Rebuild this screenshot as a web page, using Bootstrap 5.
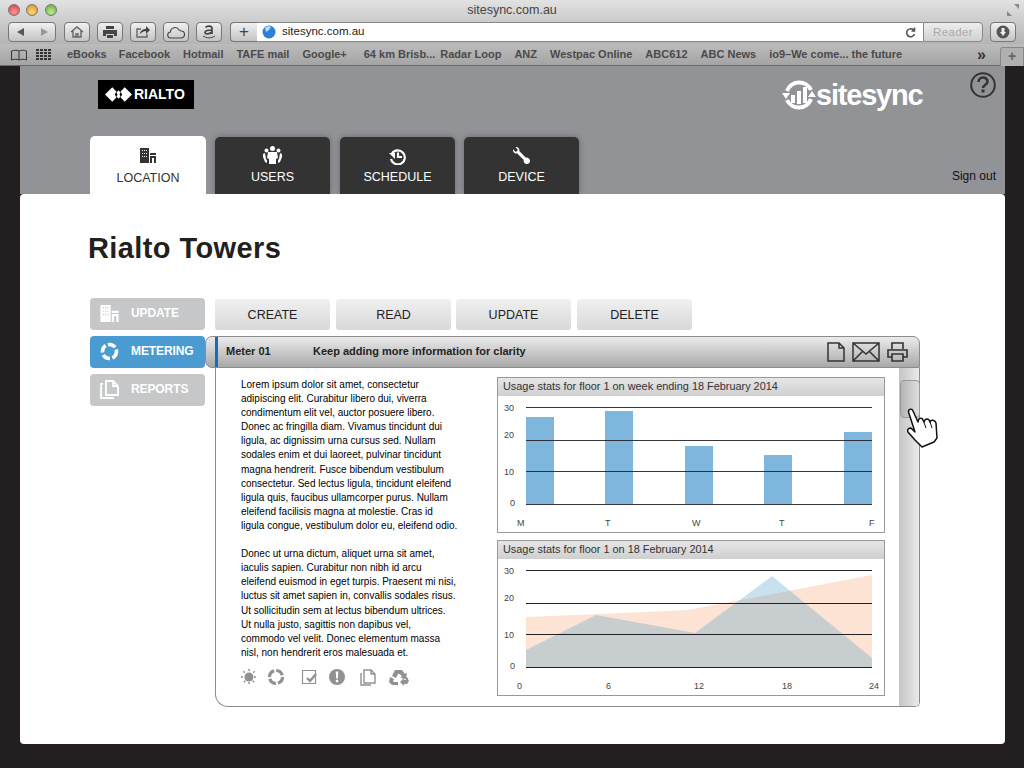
<!DOCTYPE html>
<html lang="en">
<head>
<meta charset="UTF-8" />
<title>sitesync.com.au</title>
<link href="https://cdn.jsdelivr.net/npm/bootstrap@5.3.0/dist/css/bootstrap.min.css" rel="stylesheet" />
<style>
  html, body { height: 768px; overflow: hidden; }
  body { background: #231f20; font-family: "Liberation Sans", Arial, sans-serif; color: #222; }
  svg { display: block; flex: none; }

  /* browser chrome */
  .chrome-top { height: 44px; background: linear-gradient(#e2e2e2, #b4b4b4); position: relative; }
  .chrome-title { height: 22px; font-size: 12.5px; line-height: 20px; color: #444; text-align: center; }
  .light { width: 12px; height: 12px; border-radius: 50%; position: absolute; top: 4px; border: 1px solid #777; }
  .light-r { left: 8px; background: radial-gradient(circle at 50% 70%, #ff9a9a, #d8343a); }
  .light-y { left: 26px; background: radial-gradient(circle at 50% 70%, #ffd97a, #d98a1c); }
  .light-g { left: 45px; background: radial-gradient(circle at 50% 70%, #c0ec90, #5ba83a); }
  .fullscreen { position: absolute; right: 4px; top: 3px; }
  .tool-row { height: 20px; padding-left: 8px; padding-right: 8px; }
  .tool-btn { width: 26px; height: 20px; border: 1px solid #777; border-radius: 4px; background: linear-gradient(#f0f0f0, #c4c4c4); color: #444; }
  .tool-back { width: 48px; margin-right: 8px; }
  .tool-gap { margin-right: 7px; }
  .tool-plus { width: 27px; border-radius: 4px 0 0 4px; border-right: 0; margin-left: 1px; font-size: 17px; line-height: 17px; }
  .addr { width: 666px; height: 20px; background: #fff; border: 1px solid #888; border-width: 1px 0; font-size: 11.5px; color: #222; padding-left: 5px; padding-right: 7px; gap: 6px; }
  .reader { width: 60px; height: 20px; border: 1px solid #888; border-radius: 0 4px 4px 0; background: linear-gradient(#eee, #d0d0d0); color: #aaa; font-size: 11.5px; text-align: center; line-height: 18px; margin-right: 7px; letter-spacing: .4px; }
  .bookmarks { height: 22px; background: linear-gradient(#bcbcbc, #a4a4a4); border-bottom: 1px solid #686868; font-size: 11px; font-weight: 700; color: #4a4a4a; position: relative; padding-left: 10px; }
  .bm-text { white-space: nowrap; }
  .bm-ebooks { margin-left: 16px; margin-right: 12px; }
  .bm-item { margin-right: 13px; }
  .bm-wide { margin-right: 17px; }
  .bm-tight { margin-right: 5px; }
  .bm-more { position: absolute; left: 977px; top: -1px; color: #333; font-size: 16px; }
  .bm-tab { position: absolute; right: 0; top: 3px; width: 24px; height: 19px; border: 1px solid #888; border-bottom: 0; border-radius: 3px 0 0 0; background: #b0b0b0; color: #666; text-align: center; font-size: 14px; line-height: 17px; }

  /* site header */
  .site-head { margin: 0 19px 0 20px; height: 128px; background: #929397; }
  .head-row { height: 70px; }
  .rialto-logo { width: 96px; height: 29px; background: #000; color: #fff; margin: 14px 0 0 78px; font-size: 14px; font-weight: 700; padding-left: 7px; gap: 2px; }
  .sync-logo { margin-top: 12px; margin-right: 48px; color: #fff; font-size: 29px; font-weight: 700; letter-spacing: -1.2px; width: 140px; line-height: 1; }
  .help-icon { margin-top: 6px; margin-right: 9px; }
  .tab-row { height: 58px; padding-left: 70px; gap: 9px; }
  .site-tab { width: 115px; height: 57px; margin-top: 1px; background: #333; color: #fff; border-radius: 5px 5px 0 0; font-size: 12.5px; text-decoration: none; box-shadow: 0 0 6px rgba(0,0,0,.3); padding-top: 9px; line-height: 1; text-align: center; }
  .site-tab svg { margin: 0 auto 7px; }
  .site-tab-on { width: 116px; height: 58px; margin-top: 0; background: #fff; color: #333; box-shadow: none; padding-top: 12px; }
  .site-tab-on svg { margin-bottom: 9px; }
  .tab-extra { margin-left: 1px; }
  .tab-low { padding-top: 11px; }
  .tab-low svg { margin-bottom: 6px; }
  .tab-device { padding-top: 10px; }
  .sign-out { margin-left: auto; margin-right: 9px; font-size: 12px; color: #111; text-decoration: none; align-self: flex-end; padding-bottom: 9px; }

  /* white page */
  .sheet { margin: 0 19px 0 20px; height: 550px; background: #fff; border-radius: 4px; padding: 38px 0 0 68px; position: relative; }
  .sheet-title { font-size: 29px; font-weight: 700; line-height: 32px; margin: 0 0 34px; color: #231f20; letter-spacing: .4px; }
  .side-col { width: 117px; margin-left: 2px; padding-top: 0; }
  .side-btn { width: 115px; height: 32px; margin-bottom: 6px; border-radius: 4px; background: #c6c7c9; color: #fff; font-size: 12px; font-weight: 700; padding-left: 10px; padding-bottom: 2px; gap: 12px; text-decoration: none; letter-spacing: -.1px; }
  .side-on { background: #4a9bd2; }
  .main-col { width: 715px; margin-left: -2px; }
  .crud-row { padding-left: 10px; gap: 6px; padding-top: 1px; margin-bottom: 6px; height: 32px; }
  .crud-btn { width: 115px; height: 31px; padding: 0; border: 0; border-radius: 3px; background: linear-gradient(#f0f0f0, #d8d8d8); color: #222; font-size: 12.5px; line-height: 32px; text-align: center; text-decoration: none; }
  .crud-pull { margin-left: -1px; }
  .panel-head { height: 32px; border: 1px solid #8c8c8c; border-radius: 7px 7px 0 7px; background: linear-gradient(#ebebeb, #a8a8a8); font-size: 11px; font-weight: 700; padding-left: 9px; padding-right: 11px; color: #222; }
  .panel-stripe { width: 3px; height: 30px; background: #0e6fbe; margin-right: 8px; }
  .panel-meter { width: 87px; margin-bottom: 2px; }
  .panel-clarity { margin-bottom: 2px; }
  .panel-icons { margin-left: auto; gap: 7px; }
  .panel-body { margin-left: 10px; height: 339px; border: 1px solid #8c8c8c; border-top: 0; border-radius: 0 0 5px 13px; position: relative; }
  .text-col { width: 281px; padding: 10px 0 0 25px; }
  .lorem { font-size: 10px; line-height: 14.1px; color: #000; white-space: nowrap; margin: 0 0 14.1px; }
  .mini-icons { margin-top: -6px; margin-left: -1px; }
  .chart-col { width: 388px; padding-top: 9px; gap: 7px; }
  .chart-box { height: 156px; border: 1px solid #999; background: #fff; }
  .chart-head { height: 18px; background: linear-gradient(#e6e6e6, #cfcfcf); font-size: 10.9px; line-height: 17px; padding-left: 5px; color: #333; white-space: nowrap; }
  .chart-label { font: 9px "Liberation Sans", Arial, sans-serif; fill: #444; }
  .scroll-track { width: 20px; margin-left: 14px; background: linear-gradient(90deg, #c4c4c4, #eaeaea); padding-top: 12px; border-radius: 0 0 4px 0; }
  .scroll-thumb { width: 20px; height: 38px; margin-left: 1px; background: linear-gradient(90deg, #b4b4b4, #dedede); border: 1px solid #999; border-radius: 4px; }
  .hand { position: absolute; left: 691px; top: 40px; }
</style>
</head>
<body>
  <div class="chrome-top">
    <span class="light light-r"></span><span class="light light-y"></span><span class="light light-g"></span>
    <div class="chrome-title">sitesync.com.au</div>
    <svg class="fullscreen" width="14" height="14" viewBox="0 0 14 14" fill="#888"><path d="M1 13V8l5 5zM13 1v5L8 1z"/></svg>
    <div class="tool-row d-flex align-items-center">
      <div class="tool-btn tool-back d-flex align-items-center justify-content-around">
        <svg width="10" height="10" viewBox="0 0 10 10" fill="#555"><path d="M8 1v8L1 5z"/></svg>
        <svg width="10" height="10" viewBox="0 0 10 10" fill="#999"><path d="M2 1v8l7-4z"/></svg>
      </div>
      <div class="tool-btn tool-gap d-flex align-items-center justify-content-center">
        <svg width="14" height="14" viewBox="0 0 14 14" fill="none" stroke="#666" stroke-width="1.4"><path d="M1 7l6-5 6 5M3 6v6h8V6M6 12V9h2v3"/></svg>
      </div>
      <div class="tool-btn tool-gap d-flex align-items-center justify-content-center">
        <svg width="16" height="14" viewBox="0 0 16 14"><path fill="#444" d="M4 1h8v3H4zM1 5h14v6h-3V9H4v2H1zM5 10h6v3H5z"/></svg>
      </div>
      <div class="tool-btn tool-gap d-flex align-items-center justify-content-center">
        <svg width="16" height="14" viewBox="0 0 16 14"><path fill="none" stroke="#666" stroke-width="1.4" d="M12 9v3H2V4h4"/><path fill="#444" d="M5 9c0-3 3-5 6-5V1l4 4-4 4V6c-2 0-4 1-6 3z"/></svg>
      </div>
      <div class="tool-btn tool-gap d-flex align-items-center justify-content-center">
        <svg width="18" height="13" viewBox="0 0 18 13" fill="none" stroke="#444" stroke-width="1.1"><path d="M4 12a3 3 0 0 1-.5-6A4.500 4.500 0 0 1 12 4a3 3 0 0 1 2 1 3.500 3.500 0 0 1 0 7z"/></svg>
      </div>
      <div class="tool-btn tool-gap d-flex align-items-center justify-content-center">
        <svg width="14" height="16" viewBox="0 0 14 16" fill="none" stroke="#444"><path stroke-width="1.7" d="M3.500 3.500C5 1.500 10 1.500 10 4.500V10M10 6C6 6 3 6.500 3 8.500s4 2 7-.5"/><path d="M1 12c4 2.500 8 2.500 12 0"/></svg>
      </div>
      <div class="tool-btn tool-plus text-center">+</div>
      <div class="addr d-flex align-items-center">
        <svg width="14" height="14" viewBox="0 0 14 14"><circle cx="7" cy="7" r="6.500" fill="#2f7fd8"/><path fill="#bcdcf8" d="M3 3c2-2 5-2 6-1L7 5 4 7z"/></svg>
        <span>sitesync.com.au</span>
        <svg class="ms-auto" width="11" height="11" viewBox="0 0 11 11" fill="none" stroke="#555" stroke-width="1.6"><path d="M9 3.500A4 4 0 1 0 9.500 7M9.500 0.500v3.500h-3"/></svg>
      </div>
      <div class="reader">Reader</div>
      <div class="tool-btn d-flex align-items-center justify-content-center">
        <svg width="14" height="14" viewBox="0 0 14 14"><circle cx="7" cy="7" r="6.500" fill="#555"/><path fill="#eee" d="M5.500 3h3v4H10l-3 4-3-4h1.500z"/></svg>
      </div>
    </div>
  </div>
  <div class="bookmarks d-flex align-items-center">
    <svg width="18" height="12" viewBox="0 0 18 12" fill="none" stroke="#333"><path d="M9 2C7 1 4 1 1.500 2v9C4 10 7 10 9 11c2-1 5-1 7.500 0V2C14 1 11 1 9 2zM9 2v9"/></svg>
    <svg class="ms-2" width="15" height="11" viewBox="0 0 15 11" fill="#333"><path d="M0 0h3v2H0zM4 0h3v2H4zM8 0h3v2H8zM12 0h3v2h-3zM0 3h3v2H0zM4 3h3v2H4zM8 3h3v2H8zM12 3h3v2h-3zM0 6h3v2H0zM4 6h3v2H4zM8 6h3v2H8zM12 6h3v2h-3zM0 9h3v2H0zM4 9h3v2H4zM8 9h3v2H8zM12 9h3v2h-3z"/></svg>
    <div class="bm-text d-flex">
      <span class="bm-ebooks">eBooks</span><span class="bm-item">Facebook</span><span class="bm-item">Hotmail</span><span class="bm-item">TAFE mail</span><span class="bm-wide">Google+</span><span class="bm-tight">64 km Brisb...</span><span class="bm-item">Radar Loop</span><span class="bm-item">ANZ</span><span class="bm-item">Westpac Online</span><span class="bm-item">ABC612</span><span class="bm-item">ABC News</span><span class="bm-item">io9–We come... the future</span>
    </div>
    <span class="bm-more">»</span>
    <span class="bm-tab">+</span>
  </div>

  <div class="site-head">
    <div class="head-row d-flex align-items-start">
      <div class="rialto-logo d-flex align-items-center">
        <svg width="27" height="17" viewBox="0 0 26 16" fill="#fff"><path d="M0 8l7-7 4 4-1.500 3 1.500 3-4 4zM26 8l-7-7-4 4 1.500 3-1.500 3 4 4zM13 4l2 2-1 2 1 2-2 2-2-2 1-2-1-2z"/></svg>
        <span>RIALTO</span>
      </div>
      <div class="sync-logo ms-auto d-flex align-items-center">
        <svg width="34" height="34" viewBox="0 0 34 34"><path fill="none" stroke="#fff" stroke-width="4" d="M5 13A13 13 0 0 1 29 12M29 21A13 13 0 0 1 5 22"/><path fill="#fff" d="M0 15l8 0-4 6zM34 19l-8 0 4-6zM9 17h4v8H9zM15 13h4v13h-4zM21 9h4v16h-4z"/></svg>
        <span>sitesync</span>
      </div>
      <svg class="help-icon" width="26" height="26" viewBox="0 0 26 26"><circle cx="13" cy="13" r="11.800" fill="none" stroke="#333" stroke-width="2"/><path fill="none" stroke="#333" stroke-width="2.600" d="M8.500 10c0-6 9-6 9-.5 0 3.500-4.500 3.500-4.500 6.500"/><rect x="11.500" y="17.500" width="3" height="3" fill="#333"/></svg>
    </div>
    <div class="tab-row d-flex">
      <a class="site-tab site-tab-on" href="#">
        <svg width="16" height="15" viewBox="0 0 16 15" fill="#333"><path d="M0 0h9v15H0zM10 5h6v2h-6zM10 8h6v7h-2v-5h-2v5h-2z"/><path fill="#fff" d="M2 2h1v1H2zM4 2h1v1H4zM6 2h1v1H6zM2 5h1v1H2zM4 5h1v1H4zM6 5h1v1H6zM2 8h1v1H2zM4 8h1v1H4zM6 8h1v1H6z"/></svg>
        LOCATION
      </a>
      <a class="site-tab" href="#">
        <svg width="19" height="18" viewBox="0 0 19 18" fill="#fff"><circle cx="9.500" cy="2.500" r="2.500"/><circle cx="3.500" cy="4.500" r="2"/><circle cx="15.500" cy="4.500" r="2"/><path d="M5 6h9l1 6-2 1v5H6v-5l-2-1zM0 8l2-1 1 6 1 1v3l-2-1-2-5zM19 8l-2-1-1 6-1 1v3l2-1 2-5z"/></svg>
        USERS
      </a>
      <a class="site-tab tab-extra tab-low" href="#">
        <svg width="17" height="17" viewBox="0 0 17 17" fill="none" stroke="#fff" stroke-width="2.200"><path d="M3 5.500A7 7 0 1 1 2 11M9 4.500v4.500h4"/><path fill="#fff" stroke="none" d="M0 5h6v6z"/></svg>
        SCHEDULE
      </a>
      <a class="site-tab tab-device" href="#">
        <svg width="17" height="17" viewBox="0 0 16 16" fill="#fff"><path d="M.102 2.223A3.004 3.004 0 0 0 3.780 5.897l6.341 6.252A3.003 3.003 0 0 0 13 16a3 3 0 1 0-.851-5.878L5.897 3.781A3.004 3.004 0 0 0 2.223.1l2.141 2.142L4 4l-1.757.364L.102 2.223z"/></svg>
        DEVICE
      </a>
      <a class="sign-out" href="#">Sign out</a>
    </div>
  </div>

  <div class="sheet">
    <h1 class="sheet-title">Rialto Towers</h1>
    <div class="d-flex">
      <div class="side-col">
        <a class="side-btn d-flex align-items-center" href="#">
          <svg width="19" height="17" viewBox="0 0 16 15" fill="#fff"><path d="M0 0h9v15H0zM10 5h6v2h-6zM10 8h6v7h-2v-5h-2v5h-2z"/><path fill="#c6c7c9" d="M2 2h1v1H2zM4 2h1v1H4zM6 2h1v1H6zM2 5h1v1H2zM4 5h1v1H4zM6 5h1v1H6zM2 8h1v1H2zM4 8h1v1H4zM6 8h1v1H6z"/></svg>
          <span>UPDATE</span>
        </a>
        <a class="side-btn side-on d-flex align-items-center" href="#">
          <svg width="19" height="19" viewBox="0 0 19 19" fill="none" stroke="#fff" stroke-width="3.600" stroke-dasharray="8 2.400"><circle cx="9.500" cy="9.500" r="7"/></svg>
          <span>METERING</span>
        </a>
        <a class="side-btn d-flex align-items-center" href="#">
          <svg width="19" height="19" viewBox="0 0 19 19" fill="none" stroke="#fff" stroke-width="1.800"><path d="M6 1h7l5 5v9H6zM13 1v5h5M3 4H1v14h12v-1"/></svg>
          <span>REPORTS</span>
        </a>
      </div>
      <div class="main-col">
        <div class="crud-row d-flex">
          <a class="crud-btn" href="#">CREATE</a>
          <a class="crud-btn" href="#">READ</a>
          <a class="crud-btn crud-pull" href="#">UPDATE</a>
          <a class="crud-btn" href="#">DELETE</a>
        </div>
        <div class="panel-head d-flex align-items-center">
          <span class="panel-stripe"></span>
          <span class="panel-meter">Meter 01</span>
          <span class="panel-clarity">Keep adding more information for clarity</span>
          <div class="panel-icons d-flex align-items-center">
            <svg width="18" height="20" viewBox="0 0 18 20" fill="none" stroke="#333" stroke-width="1.500"><path d="M1 1h11l5 5v13H1zM12 1v5h5"/></svg>
            <svg width="28" height="20" viewBox="0 0 28 20" fill="none" stroke="#333" stroke-width="1.500"><path d="M1 1h26v18H1zM1 1l13 11L27 1M1 19l10-10M27 19L17 9"/></svg>
            <svg width="21" height="20" viewBox="0 0 21 20" fill="none" stroke="#333" stroke-width="1.600"><path d="M5 7V1h11l0 6M1 8h19v7h-4v-3H5v3H1zM5 12h11v7H5z"/></svg>
          </div>
        </div>
        <div class="panel-body d-flex">
          <div class="text-col">
            <p class="lorem">Lorem ipsum dolor sit amet, consectetur<br>adipiscing elit. Curabitur libero dui, viverra<br>condimentum elit vel, auctor posuere libero.<br>Donec ac fringilla diam. Vivamus tincidunt dui<br>ligula, ac dignissim urna cursus sed. Nullam<br>sodales enim et dui laoreet, pulvinar tincidunt<br>magna hendrerit. Fusce bibendum vestibulum<br>consectetur. Sed lectus ligula, tincidunt eleifend<br>ligula quis, faucibus ullamcorper purus. Nullam<br>eleifend facilisis magna at molestie. Cras id<br>ligula congue, vestibulum dolor eu, eleifend odio.</p>
            <p class="lorem">Donec ut urna dictum, aliquet urna sit amet,<br>iaculis sapien. Curabitur non nibh id arcu<br>eleifend euismod in eget turpis. Praesent mi nisi,<br>luctus sit amet sapien in, convallis sodales risus.<br>Ut sollicitudin sem at lectus bibendum ultrices.<br>Ut nulla justo, sagittis non dapibus vel,<br>commodo vel velit. Donec elementum massa<br>nisl, non hendrerit eros malesuada et.</p>
            <svg class="mini-icons" width="176" height="18" viewBox="0 0 176 18" fill="#8f9194" stroke="none">
              <circle cx="9" cy="9" r="4.500"/>
              <path fill="none" stroke="#8f9194" stroke-width="1.500" stroke-dasharray="2 1.500" d="M9 1v3M9 14v3M1 9h3M14 9h3M3.300 3.300l2 2M12.700 12.700l2 2M14.700 3.300l-2 2M5.300 12.700l-2 2"/>
              <circle cx="36" cy="9" r="6.500" fill="none" stroke="#8f9194" stroke-width="3.200" stroke-dasharray="8 2"/>
              <path fill="none" stroke="#8f9194" stroke-width="1.200" d="M62.500 2.500h13v13h-13z"/>
              <path fill="none" stroke="#8f9194" stroke-width="2.400" d="M67 10l3 3 6-7"/>
              <circle cx="97" cy="9" r="8"/>
              <path fill="#fff" d="M95.700 3.500h2.600l-.5 7h-1.600zM95.800 11.800h2.400v2.400h-2.400z"/>
              <path fill="none" stroke="#8f9194" stroke-width="1.400" d="M124 2h7l4 4v9h-11zM131 2v4h4M121 5v12h10"/>
              <path d="M155 2h7l3 4 2-1-1 6-6-1 2-1-2-3-2 0-2 4-4-2zM167 9l2 4-2 3-3 0v2l-4-4 4-4v2h2l-1-2zM150 9l4 2-1 2 1 1h4v3h-6l-3-3z"/>
            </svg>
          </div>
          <div class="chart-col d-flex flex-column">
            <div class="chart-box">
              <div class="chart-head">Usage stats for floor 1 on week ending 18 February 2014</div>
              <svg width="386" height="136" viewBox="498 396 386 136">
                <g fill="#7eb6dd">
                  <rect x="526" y="417" width="28" height="87"/>
                  <rect x="605" y="411" width="28" height="93"/>
                  <rect x="685" y="446" width="28" height="58"/>
                  <rect x="764" y="455" width="28" height="49"/>
                  <rect x="844" y="432" width="28" height="72"/>
                </g>
                <path stroke="#222" fill="none" stroke-opacity=".9" d="M526 407.500h346M526 440.500h346M526 471.500h346M526 504.500h346"/>
                <g class="chart-label">
                  <text x="504" y="411">30</text><text x="504" y="438">20</text><text x="504" y="475">10</text><text x="510" y="506">0</text>
                  <text x="517" y="526">M</text><text x="605" y="526">T</text><text x="692" y="526">W</text><text x="779" y="526">T</text><text x="869" y="526">F</text>
                </g>
              </svg>
            </div>
            <div class="chart-box">
              <div class="chart-head">Usage stats for floor 1 on 18 February 2014</div>
              <svg width="386" height="136" viewBox="498 559 386 136">
                <defs><clipPath id="orangeClip"><path d="M526 617L600 614L688 610L872 575V667H526z"/></clipPath></defs>
                <path fill="#c8e1f1" d="M526 650L596 615L695 633L772 576L872 658V667H526z"/>
                <path fill="#fce3d3" d="M526 617L600 614L688 610L872 575V667H526z"/>
                <path fill="#c8cdcf" clip-path="url(#orangeClip)" d="M526 650L596 615L695 633L772 576L872 658V667H526z"/>
                <path stroke="#222" fill="none" d="M526 570.500h346M526 603.500h346M526 634.500h346M526 667.500h346"/>
                <g class="chart-label">
                  <text x="504" y="574">30</text><text x="504" y="601">20</text><text x="504" y="638">10</text><text x="510" y="669">0</text>
                  <text x="517" y="689">0</text><text x="606" y="689">6</text><text x="694" y="689">12</text><text x="782" y="689">18</text><text x="869" y="689">24</text>
                </g>
              </svg>
            </div>
          </div>
          <div class="scroll-track">
            <div class="scroll-thumb"></div>
          </div>
          <svg class="hand" width="32" height="40" viewBox="0 0 32 40">
            <path fill="#fff" stroke="#111" stroke-width="1.500" stroke-linejoin="round" d="M1.500 4C1 1 5 0 6 3L11 14C11 10 15 9 16 12L17 14C18 10 22 10 23 14C24 11 28 12 29 15L30 30L27 34L15 39L8 32L1 24C-.5 21 3 19 5 21L8 24z"/>
            <path fill="none" stroke="#111" d="M16 12l3 8M23 14l2 6"/>
          </svg>
        </div>
      </div>
    </div>
  </div>
  <script src="https://cdn.jsdelivr.net/npm/bootstrap@5.3.0/dist/js/bootstrap.bundle.min.js"></script>
</body>
</html>
